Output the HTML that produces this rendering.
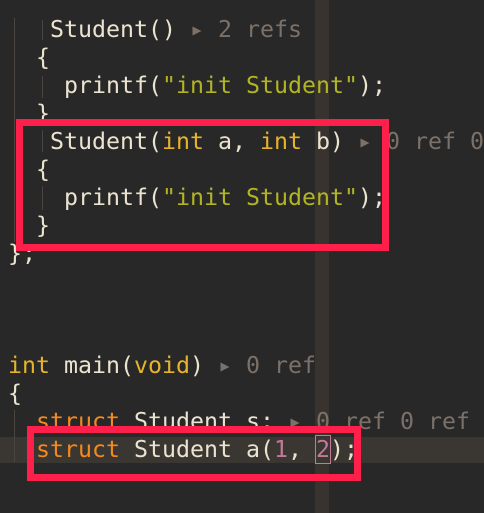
<!DOCTYPE html>
<html><head><style>
html,body{margin:0;padding:0;}
body{width:484px;height:513px;background:#282828;position:relative;overflow:hidden;font-family:"DejaVu Sans Mono","Liberation Mono",monospace;font-size:23.25px;color:#ebe3cf;}
.l{position:absolute;left:8px;white-space:pre;height:28px;line-height:28px;}
.k{color:#e7b32a}.s{color:#b3b423}.o{color:#f48a1e}.n{color:#c4789a}.r{color:#7c7168}
.col{position:absolute;left:315px;top:0;width:14px;height:513px;background:#38332f;}
.cur{position:absolute;left:0;top:437px;width:484px;height:26px;background:#3a3632;}
.g{position:absolute;width:1px;background:#4a4540;}
.box{position:absolute;border:7px solid #ff1f4b;box-sizing:border-box;}
</style></head><body>
<div class="col"></div>
<div class="cur"></div>
<div class="g" style="left:14px;top:18px;height:224px"></div>
<div class="g" style="left:42px;top:20px;height:20px"></div>
<div class="g" style="left:42px;top:76px;height:22px"></div>
<div class="g" style="left:42px;top:130px;height:22px"></div>
<div class="g" style="left:42px;top:186px;height:24px"></div>
<div class="g" style="left:14px;top:410px;height:52px"></div>
<div class="l" style="top:16px">   Student() <span class="r">▸ 2 refs</span></div>
<div class="l" style="top:44px">  {</div>
<div class="l" style="top:72px">    printf(<span class="s">"init Student"</span>);</div>
<div class="l" style="top:100px">  }</div>
<div class="l" style="top:128px">   Student(<span class="k">int</span> a, <span class="k">int</span> b) <span class="r">▸ 0 ref 0</span></div>
<div class="l" style="top:156px">  {</div>
<div class="l" style="top:184px">    printf(<span class="s">"init Student"</span>);</div>
<div class="l" style="top:212px">  }</div>
<div class="l" style="top:240px">};</div>
<div class="l" style="top:352px"><span class="k">int</span> main(<span class="k">void</span>) <span class="r">▸ 0 ref</span></div>
<div class="l" style="top:380px">{</div>
<div class="l" style="top:408px">  <span class="o">struct</span> Student s; <span class="r">▸ 0 ref 0 ref</span></div>
<div class="l" style="top:436px">  <span class="o">struct</span> Student a(<span class="n">1</span>, <span class="n" style="outline:1px solid #c4789a">2</span>);</div>
<div class="box" style="left:16px;top:119px;width:373px;height:132px"></div>
<div class="box" style="left:27px;top:426px;width:334px;height:55px"></div>
</body></html>
